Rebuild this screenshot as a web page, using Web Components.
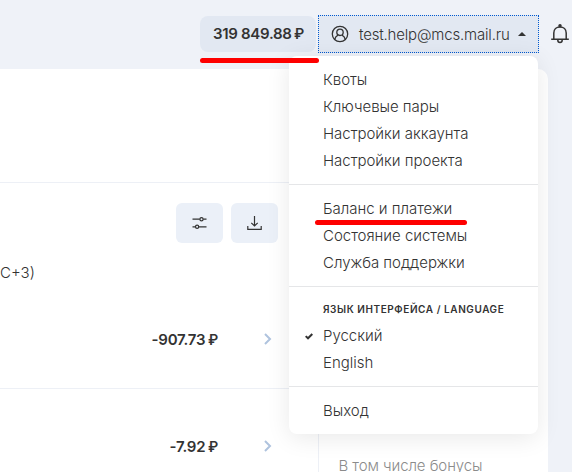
<!DOCTYPE html>
<html lang="ru"><head><meta charset="utf-8"><title>Баланс и платежи</title>
<style>
html,body{margin:0;height:100%;overflow:hidden}
body{font-family:Inter,"Liberation Sans",sans-serif;font-size:15px;color:#333;background:#eff2f8}
</style></head><body>
<cloud-app></cloud-app>
<script>
const define=(name,html)=>{
  const t=document.createElement('template');t.innerHTML=html;
  customElements.define(name,class extends HTMLElement{
    constructor(){super();this.attachShadow({mode:'open'}).append(t.content.cloneNode(true));}
  });
};
define('balance-pill',`<style>:host{display:flex;box-sizing:border-box;width:116px;height:36px;border-radius:8px;background:#e2e8f2;align-items:center;padding:0 0 2px 13px;font-weight:600;font-size:15px;white-space:nowrap;letter-spacing:-.3px}</style><span><slot></slot></span>`);
define('account-button',`<style>:host{display:flex;box-sizing:border-box;width:221px;height:38px;border:1px dotted #0059d0;background:#e2e8f2;align-items:center;padding-left:12px;font-weight:300;white-space:nowrap}
.name{width:151px;margin:0 8px 0 10px;letter-spacing:-.18px}svg{display:block;flex:none}</style>
<svg width="18" height="18" viewBox="0 0 18 18" fill="none" stroke="#333" stroke-width="1.3"><circle cx="9" cy="9" r="7.7"/><circle cx="9" cy="7.3" r="3.2"/><path d="M3.7 14.5C4.2 12 5.5 10.8 7 10.1M14.3 14.5C13.8 12 12.5 10.8 11 10.1"/></svg>
<span class="name"><slot></slot></span>
<svg width="8" height="4" viewBox="0 0 8 4"><path d="M0 4L3.4.4Q4 0 4.6.4L8 4Z" fill="#333"/></svg>`);
define('bell-icon',`<style>:host{display:block}svg{display:block}</style>
<svg width="18" height="20" viewBox="0 0 18 20" fill="none" stroke="#333" stroke-width="1.5"><path d="M.2 15.2H17.8M2.8 15V9C2.8 5.4 5.4 2.9 9 2.9S15.2 5.4 15.2 9V15M6.8 16C6.8 19.4 11.2 19.4 11.2 16"/><circle cx="9" cy="1.8" r="1" fill="#333"/></svg>`);
define('tool-button',`<style>:host{display:flex;width:47px;height:40px;border-radius:6px;background:#ebf0f8;align-items:center;justify-content:center}</style><slot></slot>`);
define('payment-row',`<style>:host{display:flex;align-items:center;height:22px;font-weight:600;letter-spacing:-.2px}
.sum{width:218px;text-align:right;white-space:nowrap}svg{display:block;margin-left:46px}</style><span class="sum"><slot></slot></span>
<svg width="8" height="12" viewBox="0 0 8 12" fill="none" stroke="#afc3de" stroke-width="2"><path d="M1 1L6 6L1 11"/></svg>`);
define('menu-item',`<style>:host{display:flex;height:27px;align-items:center;padding-left:34px;position:relative;font-weight:300;white-space:nowrap;letter-spacing:-.02px}svg{display:none;position:absolute;left:16px;top:11px}:host([checked]) svg{display:block}</style>
<svg width="8" height="7" viewBox="0 0 8 7" fill="none" stroke="#333" stroke-width="2"><path d="M.7 3.1L3 5.3L7.3 1"/></svg><slot></slot>`);
define('menu-heading',`<style>:host{display:flex;height:26px;align-items:center;padding-left:34px;font-size:10px;font-weight:600;letter-spacing:.57px;white-space:nowrap}</style><slot></slot>`);
define('menu-group',`<style>:host{display:block;padding:10px 0}:host([divided]){border-top:1px solid #e5e6e8}:host([tight]){padding:9px 0 10px}</style><slot></slot>`);
define('drop-menu',`<style>:host{display:block;box-sizing:border-box;width:249px;height:378px;border-radius:8px;background:#fff;box-shadow:0 4px 24px rgba(0,0,0,.09)}</style><slot></slot>`);
define('red-mark',`<style>:host{display:block;height:5px;border-radius:3px;background:#fe0000}</style>`);
define('cloud-app',`<style>
:host{display:block;position:relative;width:572px;height:472px;overflow:hidden}
header{display:flex;height:69px;box-sizing:border-box;padding:15px 0 0 200px;align-items:flex-start}
balance-pill{margin-top:1px}account-button{margin-left:2px}bell-icon{margin:9px 0 0 12px}
.rub{font-size:14px;margin-left:-1px}
main{display:flex;width:548px;height:403px;background:#fff;border-radius:0 10px 0 0;overflow:hidden}
.left{width:318px;display:flex;flex-direction:column}
.top{height:113px;border-bottom:1px solid #edf0f6}
.tools{display:flex;gap:8px;padding:20px 0 0 176px;height:40px}
.tz{height:22px;line-height:22px;margin-top:19px;font-weight:300}
payment-row{margin-top:44px}
.line{height:1px;background:#edf0f6;margin-top:38px}
payment-row.b{margin-top:46px}
aside{flex:1;margin-top:113px;border-left:1px solid #edf0f6;color:#8b8b8b;font-weight:300;padding:275px 0 0 19.5px;box-sizing:border-box;height:290px;white-space:nowrap}
aside div{line-height:18px;letter-spacing:-.08px}
drop-menu{position:absolute;left:289px;top:56px}
.m1{position:absolute;left:200px;top:58px;width:119px}
.m2{position:absolute;left:315px;top:220px;width:152px}
</style>
<header><balance-pill>319 849.88 <span class="rub">₽</span></balance-pill><account-button>test.help@mcs.mail.ru</account-button><bell-icon></bell-icon></header>
<main><section class="left"><div class="top"></div>
<div class="tools"><tool-button><svg width="15" height="14" viewBox="0.5 0 15 14" fill="none" stroke="#333" stroke-width="1.2"><path d="M1 3.2H8.3M11.7 3.2H15M1 10.8H4M7.3 10.8H15"/><circle cx="10" cy="3.2" r="1.6"/><circle cx="5.6" cy="10.8" r="1.6"/></svg></tool-button>
<tool-button><svg width="15" height="16" viewBox="0.5 0 15 16" fill="none" stroke="#333" stroke-width="1.2"><path d="M8 1V11M4.8 7.8L8 11L11.2 7.8M1.3 11V14.4H14.7V11"/></svg></tool-button></div>
<div class="tz">C+3)</div>
<payment-row>-907.73 <span class="rub">₽</span></payment-row><div class="line"></div><payment-row class="b">-7.92 <span class="rub">₽</span></payment-row></section>
<aside><div>В том числе бонусы</div></aside></main>
<drop-menu>
<menu-group><menu-item>Квоты</menu-item><menu-item>Ключевые пары</menu-item><menu-item>Настройки аккаунта</menu-item><menu-item>Настройки проекта</menu-item></menu-group>
<menu-group divided><menu-item>Баланс и платежи</menu-item><menu-item>Состояние системы</menu-item><menu-item>Служба поддержки</menu-item></menu-group>
<menu-group divided tight><menu-heading>ЯЗЫК ИНТЕРФЕЙСА / LANGUAGE</menu-heading><menu-item checked>Русский</menu-item><menu-item>English</menu-item></menu-group>
<menu-group divided><menu-item>Выход</menu-item></menu-group>
</drop-menu>
<red-mark class="m1"></red-mark><red-mark class="m2"></red-mark>`);
</script></body></html>
